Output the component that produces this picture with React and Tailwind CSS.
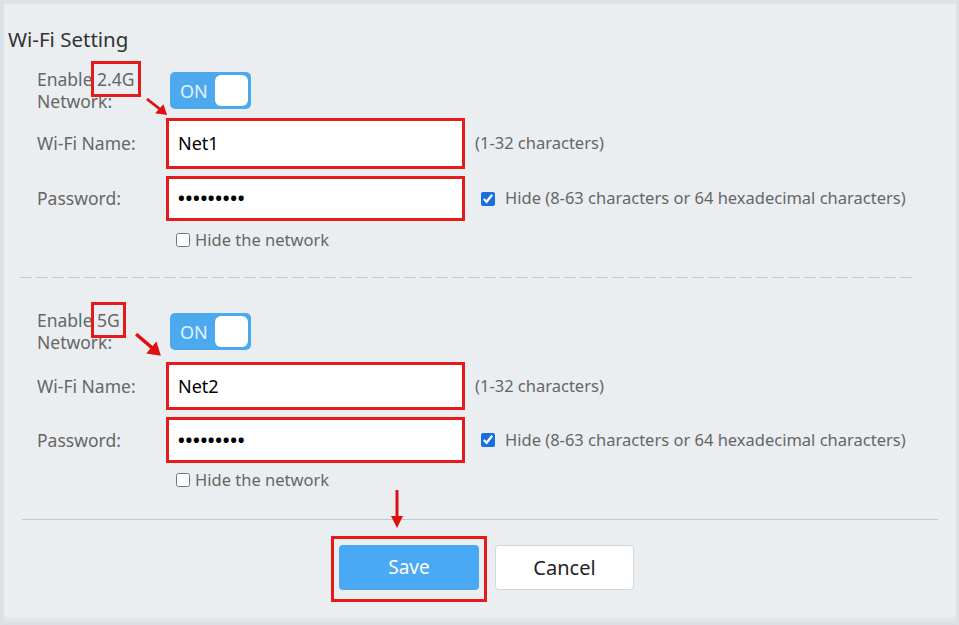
import React from 'react';

const FONT = { fontFamily: '"Noto Sans", "Open Sans", sans-serif' };

const Toggle = () => (
  <div className="flex h-[37px] w-[81px] items-center justify-between rounded-[5px] bg-[#4da9ee] p-[3px] pl-[10px]">
    <span className="text-[18px] leading-none text-[#e3f2ff]">ON</span>
    <span className="h-[31px] w-[33px] rounded-[6px] bg-white" />
  </div>
);

const Arrow = ({ className, w, h }) => (
  <svg className={className} width={w} height={h} viewBox="0 0 24 20" preserveAspectRatio="none">
    <line x1="1" y1="1" x2="16" y2="13" stroke="#e01010" strokeWidth="3" />
    <polygon points="23,19 10,17 19,7" fill="#e01010" />
  </svg>
);

const Field = ({ children, height }) => (
  <div
    className={`flex w-[299px] items-center border-[3px] border-[#e41b1b] bg-white px-[9px] text-[18px] text-black ${height}`}
  >
    {children}
  </div>
);

const Band = ({ band, net, arrowClass, arrowW, arrowH, nameTop, nameH, passH, hideTop }) => (
  <div className="relative pl-[33px]">
    <div className="flex">
      <div className="w-[129px] text-[17.5px] leading-[22px] text-[#666]">
        Enable{' '}
        <span className="outline-[3px] outline-offset-[3px] outline-[#e41b1b] outline-solid">{band}</span>
        <br />
        Network:
      </div>
      <div className="ml-[4px] mt-[4px]">
        <Toggle />
      </div>
    </div>
    <Arrow className={arrowClass} w={arrowW} h={arrowH} />

    <div className={`flex items-center ${nameTop}`}>
      <div className="w-[129px] text-[17.5px] text-[#666]">Wi-Fi Name:</div>
      <Field height={nameH}>{net}</Field>
      <span className="ml-[10px] text-[16.5px] text-[#666]">(1-32 characters)</span>
    </div>

    <div className="mt-[7px] flex items-center">
      <div className="w-[129px] text-[17.5px] text-[#666]">Password:</div>
      <Field height={passH}>
        <span className="text-[18px] font-bold tracking-[0.7px]">•••••••••</span>
      </Field>
      <input type="checkbox" defaultChecked className="ml-[16px] h-[14px] w-[14px] accent-[#1b6fdc]" />
      <span className="ml-[10px] text-[16.5px] text-[#666]">
        Hide (8-63 characters or 64 hexadecimal characters)
      </span>
    </div>

    <label className={`flex h-[22px] items-center pl-[139px] text-[16.5px] text-[#666] ${hideTop}`}>
      <input type="checkbox" className="h-[14px] w-[14px]" />
      <span className="ml-[5px]">Hide the network</span>
    </label>
  </div>
);

export default function App() {
  return (
    <div
      style={FONT}
      className="relative flex h-[625px] w-[959px] flex-col overflow-hidden border-l-[4px] border-r-[3px] border-[#dbe2e7] bg-[#eaeef1]"
    >
      <div className="h-[4px] bg-[#dde2e6]" />

      <h2 className="ml-[4px] mt-[22px] text-[20.5px] leading-[27px] text-[#333]">Wi-Fi Setting</h2>

      <div className="mt-[15px]">
        <Band
          band="2.4G"
          net="Net1"
          arrowClass="absolute left-[142px] top-[30px]"
          arrowW={22}
          arrowH={18}
          nameTop="mt-[6px]"
          nameH="h-[51px]"
          passH="h-[45px]"
          hideTop="mt-[8px]"
        />
      </div>

      <div className="ml-[16px] mt-[26px] h-px w-[895px] bg-[repeating-linear-gradient(90deg,#c4c9cd_0_12px,transparent_12px_16px)]" />

      <div className="mt-[31px]">
        <Band
          band="5G"
          net="Net2"
          arrowClass="absolute left-[131px] top-[24px]"
          arrowW={27}
          arrowH={24}
          nameTop="mt-[9px]"
          nameH="h-[48px]"
          passH="h-[46px]"
          hideTop="mt-[6px]"
        />
      </div>

      <div className="relative mx-[18px] mt-[28px] border-t border-[#c2c7cb]">
        <svg className="absolute left-[369px] top-[-30px]" width="12" height="40" viewBox="0 0 12 40">
          <line x1="6" y1="0" x2="6" y2="28" stroke="#e01010" strokeWidth="3" />
          <polygon points="0,26 12,26 6,38" fill="#e01010" />
        </svg>
      </div>

      <div className="mt-[16px] flex items-start pl-[327px]">
        <div className="border-[3px] border-[#e41b1b] px-[5px] pb-[9px] pt-[6px]">
          <button className="flex h-[45px] w-[140px] items-center justify-center rounded-[4px] bg-[#4aa9f4] text-[19px] text-white">
            Save
          </button>
        </div>
        <button className="ml-[8px] mt-[9px] flex h-[45px] w-[139px] items-center justify-center rounded-[4px] border border-[#d2d6da] bg-white text-[20px] text-[#222]">
          Cancel
        </button>
      </div>

      <div className="absolute bottom-0 left-0 right-0 h-[8px] bg-gradient-to-b from-[#e6eaed] to-[#d9dee2]" />
    </div>
  );
}
